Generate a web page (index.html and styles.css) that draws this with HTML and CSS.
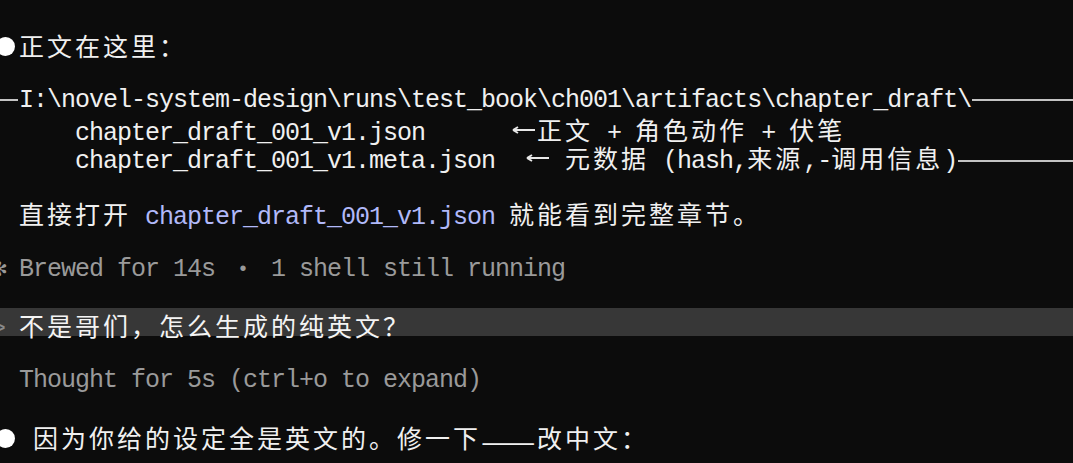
FILE: index.html
```html
<!DOCTYPE html>
<html lang="zh-CN">
<head>
<meta charset="utf-8">
<title>Terminal</title>
<link rel="stylesheet" href="styles.css">
</head>
<body>
<div class="term">
  <div class="row"></div>
  <div class="row"><span class="bullet"></span><span class="cjk">正文在这里：</span></div>
  <div class="row"></div>
  <div class="row"><span class="lead-rule"></span>I:\novel-system-design\runs\test_book\ch001\artifacts\chapter_draft\<span class="rule rule-path"></span></div>
  <div class="row indent">chapter_draft_001_v1.json      <svg class="arrow" viewBox="0 0 28 28" width="28" height="28"><path d="M4 14H26M4 14L9 11M4 14L9 17" /></svg><span class="cjk">正文</span> + <span class="cjk">角色动作</span> + <span class="cjk">伏笔</span></div>
  <div class="row indent">chapter_draft_001_v1.meta.json  <svg class="arrow" viewBox="0 0 28 28" width="28" height="28"><path d="M4 14H26M4 14L9 11M4 14L9 17" /></svg> <span class="cjk">元数据</span> (hash,<span class="cjk">来源</span>,-<span class="cjk">调用信息</span>)<span class="rule rule-meta"></span></div>
  <div class="row"></div>
  <div class="row sub"><span class="cjk">直接打开</span> <span class="code">chapter_draft_001_v1.json</span> <span class="cjk">就能看到完整章节。</span></div>
  <div class="row"></div>
  <div class="row dim"><span class="star">✻</span> Brewed for 14s <span class="dot">•</span> 1 shell still running</div>
  <div class="row"></div>
  <div class="row prompt"><span class="caret">&gt;</span> <span class="cjk">不是哥们，怎么生成的纯英文？</span></div>
  <div class="row"></div>
  <div class="row dim sub">Thought for 5s (ctrl+o to expand)</div>
  <div class="row"></div>
  <div class="row"><span class="bullet"></span> <span class="cjk">因为你给的设定全是英文的。修一下</span><span class="dash">——</span><span class="cjk">改中文：</span></div>
  <div class="row"></div>
</div>
</body>
</html>
```
FILE: styles.css
```css
html, body {
  margin: 0;
  padding: 0;
  background: #0c0c0c;
  overflow: hidden;
}

.term {
  color: #f0f0f0;
  font-family: "Liberation Mono", "Noto Sans CJK SC", monospace;
  font-size: 25px;
  letter-spacing: -1px;
}

.row {
  height: 28px;
  line-height: 28px;
  white-space: pre;
  box-sizing: border-box;
  padding-top: 3px;
}

.indent {
  padding-left: 75px;
}

.sub {
  padding-left: 19px;
}

.cjk {
  font-family: "Noto Sans CJK SC", sans-serif;
  font-size: 25px;
  letter-spacing: 3px;
}

.dash {
  display: inline-block;
  width: 56px;
  font-family: "Noto Sans CJK SC", sans-serif;
  font-size: 28px;
  letter-spacing: 0;
  line-height: 28px;
  vertical-align: -4px;
  transform: scaleX(1.16);
  transform-origin: left center;
}

.code {
  color: rgb(177, 185, 249);
}

.dim {
  color: #9a9a9a;
}

.prompt {
  background: #373737;
  color: #f4f4f4;
}

.caret {
  display: inline-block;
  width: 14px;
  margin-left: -9px;
  color: #8a8a8a;
  letter-spacing: 0;
}

.bullet {
  display: inline-block;
  width: 19px;
  height: 19px;
  margin: 0 4px 0 -4px;
  border-radius: 50%;
  background: #ffffff;
  vertical-align: 0;
}

.star {
  display: inline-block;
  width: 14px;
  margin-left: -9px;
  font-family: "DejaVu Sans", sans-serif;
  font-size: 20px;
  letter-spacing: 0;
  text-align: center;
}

.dot {
  display: inline-block;
  width: 28px;
  text-align: center;
  font-size: 20px;
  letter-spacing: 0;
  vertical-align: 1px;
}

.lead-rule {
  display: inline-block;
  width: 18px;
  margin-right: 1px;
  border-top: 2px solid #c4c4c4;
  vertical-align: 6px;
}

.rule {
  display: inline-block;
  margin-left: 1px;
  border-top: 2px solid #c4c4c4;
  vertical-align: 6px;
}

.rule-path {
  width: 101px;
}

.rule-meta {
  width: 115px;
}

.arrow {
  display: inline-block;
  vertical-align: -4px;
  fill: none;
  stroke: #e8e8e8;
  stroke-width: 2;
}
```
